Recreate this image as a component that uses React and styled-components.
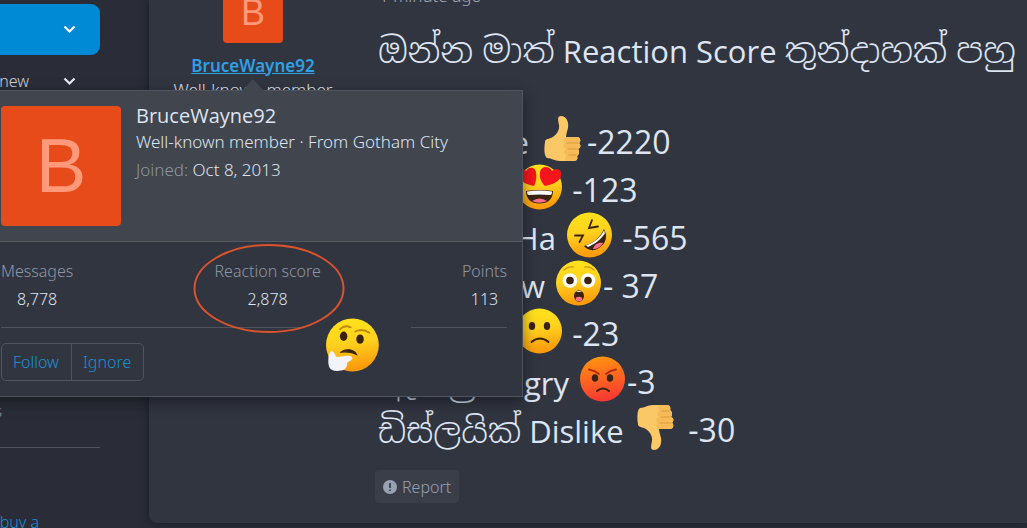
import React from 'react';
import styled, { createGlobalStyle, css } from 'styled-components';

const Global = createGlobalStyle`
  * { box-sizing: border-box; }
  body {
    margin: 0;
    background: #2a2d37;
    color: #dde4f2;
    font: 300 16px/24px "Noto Sans", "Open Sans", sans-serif;
    overflow: hidden;
  }
  button { font: inherit; cursor: pointer; }
  a { color: inherit; }
`;

const Page = styled.div`
  position: relative;
  display: flex;
  align-items: flex-start;
  height: 100vh;
  overflow: hidden;
`;

const Sidebar = styled.nav`
  flex: none;
  width: 100px;
  display: flex;
  flex-direction: column;
`;

const NavMain = styled.button`
  display: flex;
  align-items: center;
  justify-content: flex-end;
  height: 51px;
  margin-top: 4px;
  padding: 0 24px;
  border: 0;
  border-radius: 0 9px 9px 0;
  background: #0089d4;
  color: #fff;
`;

const NavRow = styled.div`
  display: flex;
  align-items: center;
  justify-content: space-between;
  height: 52px;
  padding-right: 24px;
`;

const ToggleButton = styled.button`
  display: flex;
  padding: 0;
  border: 0;
  background: none;
  color: #e6ebf5;
`;

const CutText = styled.span`
  display: flex;
  justify-content: flex-end;
  white-space: nowrap;
  width: ${(p) => p.$width}px;
  color: ${(p) => p.$color};
`;

const SideBlock = styled.div`
  display: flex;
  align-items: flex-end;
  height: 341px;
  padding-bottom: 24px;
  border-bottom: 1px solid #50545e;
`;

const SideLink = styled.a`
  display: block;
  margin-top: 62px;
  text-decoration: none;
`;

const Post = styled.article`
  flex: 1;
  min-width: 0;
  display: flex;
  margin-left: 49px;
  background: #313540;
  border-radius: 0 0 0 8px;
  box-shadow: 0 0 10px rgba(15, 17, 24, 0.6);
`;

const UserCell = styled.aside`
  flex: none;
  width: 208px;
  display: flex;
  flex-direction: column;
  align-items: center;
  font-size: 17px;
`;

const Avatar = styled.div`
  flex: none;
  display: flex;
  align-items: center;
  justify-content: center;
  background: #e64b19;
  color: #ff997a;
  border-radius: 4px;
  font-family: "Liberation Sans", Arial, sans-serif;
  font-weight: 400;
  ${(p) =>
    p.$small
      ? css`width: 60px; height: 60px; margin-top: -17px; font-size: 36px;`
      : css`width: 120px; height: 120px; font-size: 76px;`}
`;

const UserLink = styled.a`
  margin-top: 11px;
  color: #2f9fe6;
  font-weight: 600;
`;

const Content = styled.div`
  flex: 1;
  min-width: 0;
  padding: 0 0 20px 18px;
`;

const PostTime = styled.time`
  display: flex;
  align-items: flex-end;
  height: 26px;
  margin-left: 4px;
  padding-bottom: 18px;
  color: #a3a9b8;
  font-size: 17px;
`;

const Message = styled.div`
  margin-left: 3px;
  font: 400 31px/48px "Open Sans", "Noto Sans", sans-serif;
  white-space: pre;
`;

const Sinhala = styled.span`
  font-family: "Open Sans", "Noto Sans", "Noto Sans Sinhala", sans-serif;
  font-size: ${(p) => (p.$large ? 35 : 34)}px;
  font-weight: 300;
`;

const Title = styled.p`
  margin: 0 0 41px;
  height: 49px;
`;

const ReactionRow = styled.div`
  display: flex;
  height: 48px;
  line-height: 52px;
`;

const Lead = styled.span`
  flex: none;
  width: ${(p) => p.$width}px;
  display: flex;
  align-items: baseline;
  justify-content: ${(p) => (p.$start ? 'flex-start' : 'flex-end')};
  padding-right: 3px;
`;

const Count = styled.span`
  padding-left: 1px;
  font-size: 32px;
`;

const EmojiSvg = styled.svg`
  flex: none;
  display: block;
  width: 46px;
  height: 46px;
`;

const ReportButton = styled.button`
  display: flex;
  align-items: center;
  gap: 5px;
  height: 33px;
  margin-top: 18px;
  padding: 0 8px;
  border: 0;
  border-radius: 4px;
  background: #3a3e49;
  color: #98a0b3;
`;

const Tooltip = styled.section`
  position: absolute;
  left: -16px;
  top: 90px;
  width: 539px;
  border: 1px solid #50545e;
  background: #313540;
  box-shadow: 0 5px 12px rgba(10, 12, 20, 0.5);
`;

const Arrow = styled.svg`
  position: absolute;
  left: 256px;
  top: -13px;
  width: 24px;
  height: 14px;
`;

const CardHead = styled.header`
  display: flex;
  gap: 15px;
  height: 151px;
  padding: 15px 16px;
  background: #40454e;
  border-bottom: 1px solid #555962;
`;

const CardInfo = styled.div`
  display: flex;
  flex-direction: column;
`;

const CardName = styled.h4`
  margin: -4px 0 0;
  font: 400 20px/28px "Open Sans", sans-serif;
`;

const CardLine = styled.div`
  height: 28px;
  font-size: 17px;
  line-height: 24px;
  white-space: nowrap;
`;

const Muted = styled.span`
  color: #8e95a5;
`;

const CardBody = styled.div`
  padding: 15px 15px 15px 16px;
`;

const Stats = styled.dl`
  display: flex;
  justify-content: space-between;
  height: 70px;
  margin: 0;
  text-align: center;
  line-height: 28px;
  dd { margin: 0; }
  dt { color: #8e95a5; }
`;

const Rules = styled.div`
  display: flex;
  justify-content: space-between;
`;

const Rule = styled.span`
  height: 1px;
  width: ${(p) => p.$width}px;
  background: #50545e;
`;

const ButtonGroup = styled.div`
  display: inline-flex;
  margin-top: 15px;
  border: 1px solid #50545e;
  border-radius: 5px;
  vertical-align: top;
`;

const GroupButton = styled.button`
  height: 36px;
  padding: 0 12px 0 11px;
  border: 0;
  background: none;
  color: #1c8fd3;
  & + & { border-left: 1px solid #50545e; }
`;

const Circle = styled.svg`
  position: absolute;
  left: 193px;
  top: 243px;
  width: 152px;
  height: 91px;
`;

const Thinking = styled.span`
  position: absolute;
  left: 326px;
  top: 318px;
  ${EmojiSvg} { width: 54px; height: 54px; }
`;

function Chevron() {
  return (
    <svg width="13" height="9" viewBox="0 0 13 9" fill="none" stroke="currentColor" strokeWidth="2.200" aria-hidden="true">
      <path d="M1.500 1.500 6.500 6.500 11.500 1.500" />
    </svg>
  );
}

const faceStops = {
  yellow: ['#ffe51a', '#ffd21f', '#fb9b0c'],
  red: ['#ff9a0c', '#fd6a20', '#f93a31'],
};

function Face({ id, tone = 'yellow', children }) {
  const [a, b, c] = faceStops[tone];
  return (
    <EmojiSvg viewBox="0 0 46 46" aria-hidden="true">
      <defs>
        <linearGradient id={id} x1="0" y1="0" x2="0.15" y2="1">
          <stop offset="0" stopColor={a} />
          <stop offset="0.5" stopColor={b} />
          <stop offset="1" stopColor={c} />
        </linearGradient>
      </defs>
      <circle cx="22.500" cy="23" r="22.500" fill={`url(#${id})`} />
      {children}
    </EmojiSvg>
  );
}

const dark = '#3b2313';

function ThumbShape() {
  return (
    <>
      <path
        d="M5 26 C5 23 8 23 11 22 C16 20 20 14 19 9 C18 4 17 0 21 0 C27 0 29 7 28 12 C27 16 26 19 26 21 L37 21 C41 21 41 26 39 27 C41 29 41 32 38 33 C40 35 39 39 37 40 C38 42 37 45 34 45 L20 45 C14 45 12 42 7 42 C4 40 4 32 5 26 Z"
        fill="#fbc868"
      />
      <path
        d="M27 21 C23 22 22 25 25 27 C22 29 23 32 26 33 C23 35 24 39 27 39 C24 41 25 45 28 45 L34 45 C37 45 38 42 37 40 C39 39 40 35 38 33 C41 32 41 29 39 27 C41 26 41 21 37 21 Z"
        fill="#f6bb59"
      />
      <path d="M27 27 H38 M28 33 H37 M29 39 H36" stroke="#d9993e" strokeWidth="1.200" strokeLinecap="round" fill="none" />
    </>
  );
}

function Emoji({ kind }) {
  switch (kind) {
    case 'like':
      return <EmojiSvg viewBox="0 0 46 46" aria-hidden="true"><ThumbShape /></EmojiSvg>;
    case 'dislike':
      return (
        <EmojiSvg viewBox="0 0 46 46" aria-hidden="true">
          <g transform="matrix(1 0 0 -1 0 46)"><ThumbShape /></g>
        </EmojiSvg>
      );
    case 'love':
      return (
        <Face id="f-love">
          <path d="M9 27 Q22.500 25 36 27 C36 35 31 39.500 22.500 39.500 C14 39.500 9 35 9 27 Z" fill={dark} />
          <path d="M10 27.500 Q22.500 25.500 35 27.500 C35 30 34.500 31 33 31 Q22.500 30 12 31 C10.500 31 10 30 10 27.500 Z" fill="#fff" />
          <path d="M15 37 Q22.500 32 30 37 Q22.500 40.500 15 37 Z" fill="#f8708c" />
          <path d="M17 22 C11 21 3 18 2 12 C1 6 5 3 9 7 C12 2 18 3 19 8 C20 13 19 18 17 22 Z" fill="#f6151d" />
          <path d="M28 22 C33 21 44 18 44 11 C45 5 39 3 35 7 C32 1 24 2 23 8 C22 13 24 18 28 22 Z" fill="#f6151d" />
        </Face>
      );
    case 'haha':
      return (
        <Face id="f-haha">
          <path d="M25 8 22 16 31 14.500 M8 23.500 16 23.500 12.500 30" fill="none" stroke={dark} strokeWidth="1.800" strokeLinecap="round" />
          <path d="M17 34 C25 32 33 26 37 17 C41 24 39 32 32 36 C26 40 20 38 17 34 Z" fill={dark} />
          <path d="M19 33.500 C26 31 33 26 37 18.500 C38 20 38 21 37.500 22 C33 28 28 32 21 35 Z" fill="#fff" />
          <path d="M26 37 C27 33 31 30 36 31 C34 35 30 37 26 37 Z" fill="#f8708c" />
        </Face>
      );
    case 'wow':
      return (
        <Face id="f-wow">
          <circle cx="14" cy="20.500" r="7.300" fill="#fff" />
          <circle cx="32" cy="20.500" r="7.300" fill="#fff" />
          <circle cx="14" cy="20.500" r="3.800" fill={dark} />
          <circle cx="32" cy="20.500" r="3.800" fill={dark} />
          <path d="M8 10 Q12 6 17 7 M29 7 Q34 6 38 10" fill="none" stroke="#d09a1a" strokeWidth="1.300" strokeLinecap="round" />
          <ellipse cx="23" cy="36" rx="5" ry="5.700" fill={dark} />
          <ellipse cx="23" cy="39" rx="3.300" ry="2.200" fill="#f8708c" />
          <path d="M20 32 Q23 30 26 32 Z" fill="#fff" />
        </Face>
      );
    case 'sad':
      return (
        <Face id="f-sad">
          <ellipse cx="15" cy="18" rx="3.200" ry="4" fill={dark} />
          <ellipse cx="30" cy="18" rx="3.200" ry="4" fill={dark} />
          <path d="M14.500 34 Q23 27 31.500 34" fill="none" stroke={dark} strokeWidth="2" strokeLinecap="round" />
        </Face>
      );
    case 'angry':
      return (
        <Face id="f-angry" tone="red">
          <path d="M9 13.500 Q15 14.500 19 18 M36 13.500 Q30 14.500 26 18" fill="none" stroke="#b52a12" strokeWidth="1.800" strokeLinecap="round" />
          <ellipse cx="15" cy="22" rx="3.200" ry="3.800" fill={dark} />
          <ellipse cx="30" cy="22" rx="3.200" ry="3.800" fill={dark} />
          <path d="M17 35 Q23 30 29 35" fill="none" stroke={dark} strokeWidth="2" strokeLinecap="round" />
        </Face>
      );
    default:
      return (
        <Face id="f-think">
          <path d="M12 9.500 Q16 5.500 21 8 M25 11.500 Q31 8.500 37 12.500" fill="none" stroke="#c08a12" strokeWidth="1.600" strokeLinecap="round" />
          <ellipse cx="15" cy="15.500" rx="3.200" ry="4" fill={dark} />
          <ellipse cx="29" cy="18" rx="3.200" ry="4" fill={dark} />
          <path d="M13 29 C17 25.500 24 27 26 31 C22 29 18 28.500 13 29 Z" fill={dark} stroke={dark} />
          <path d="M3 30 C4 27 7 28 8.500 33 C14 33 19 31 22 33 C24 35 20 37 18 38 C18 43 16 45 11 45 C5 46 2 43 2 38 C2 34 2 31 3 30 Z" fill="#f2f4fa" />
        </Face>
      );
  }
}

const reactions = [
  { kind: 'like', label: 'Like ', count: '-2220', lead: 162 },
  { kind: 'love', label: 'Love ', count: ' -123', lead: 139 },
  { kind: 'haha', label: 'Ha Ha ', count: ' -565', lead: 189 },
  { kind: 'wow', label: 'Wow ', count: '- 37', lead: 178 },
  { kind: 'sad', label: 'Sad ', count: ' -23', lead: 139 },
  { kind: 'angry', sinhala: 'ඇන්ග්‍රි', label: ' Angry ', count: '-3', lead: 202 },
  { kind: 'dislike', sinhala: 'ඩිස්ලයික්', label: ' Dislike ', count: ' -30', lead: 255, start: true },
];

const stats = [
  ['Messages', '8,778'],
  ['Reaction score', '2,878'],
  ['Points', '113'],
];

export default function App() {
  return (
    <Page>
      <Global />
      <Sidebar>
        <NavMain aria-label="Expand section"><Chevron /></NavMain>
        <NavRow>
          <CutText $width={29} $color="#c9cfdb">new</CutText>
          <ToggleButton aria-label="Toggle expanded"><Chevron /></ToggleButton>
        </NavRow>
        <SideBlock><CutText $width={2} $color="#8e95a5">s</CutText></SideBlock>
        <SideLink href="#buy"><CutText $width={39} $color="#1c8fd3">buy a</CutText></SideLink>
      </Sidebar>

      <Post>
        <UserCell>
          <Avatar $small>B</Avatar>
          <UserLink href="#member">BruceWayne92</UserLink>
          <span>Well-known member</span>
        </UserCell>
        <Content>
          <PostTime>1 minute ago</PostTime>
          <Message>
            <Title>
              <Sinhala $large>ඔන්න මාත්</Sinhala> Reaction Score <Sinhala $large>තුන්දාහක් පහු</Sinhala>
            </Title>
            {reactions.map((r) => (
              <ReactionRow key={r.kind}>
                <Lead $width={r.lead} $start={r.start}>
                  {r.sinhala && <Sinhala>{r.sinhala}</Sinhala>}
                  <span>{r.label}</span>
                </Lead>
                <Emoji kind={r.kind} />
                <Count>{r.count}</Count>
              </ReactionRow>
            ))}
          </Message>
          <ReportButton>
            <svg width="14" height="14" viewBox="0 0 14 14" aria-hidden="true">
              <circle cx="7" cy="7" r="7" fill="#98a0b3" />
              <path d="M7 3v5M7 9.500v1.500" stroke="#3a3e49" strokeWidth="1.800" />
            </svg>
            Report
          </ReportButton>
        </Content>
      </Post>

      <Tooltip aria-label="Member card">
        <Arrow viewBox="0 0 24 14" aria-hidden="true">
          <path d="M0 14 12 1 24 14Z" fill="#40454e" />
        </Arrow>
        <CardHead>
          <Avatar>B</Avatar>
          <CardInfo>
            <CardName>BruceWayne92</CardName>
            <CardLine>Well-known member · From Gotham City</CardLine>
            <CardLine><Muted>Joined:</Muted> Oct 8, 2013</CardLine>
          </CardInfo>
        </CardHead>
        <CardBody>
          <Stats>
            {stats.map(([label, value]) => (
              <div key={label}>
                <dt>{label}</dt>
                <dd>{value}</dd>
              </div>
            ))}
          </Stats>
          <Rules><Rule $width={300} /><Rule $width={96} /></Rules>
          <ButtonGroup>
            <GroupButton>Follow</GroupButton>
            <GroupButton>Ignore</GroupButton>
          </ButtonGroup>
        </CardBody>
      </Tooltip>

      <Circle viewBox="0 0 152 91" aria-hidden="true">
        <ellipse cx="76" cy="45.500" rx="74.500" ry="43.500" fill="none" stroke="#d9532c" strokeWidth="2" />
      </Circle>
      <Thinking><Emoji kind="think" /></Thinking>
    </Page>
  );
}
